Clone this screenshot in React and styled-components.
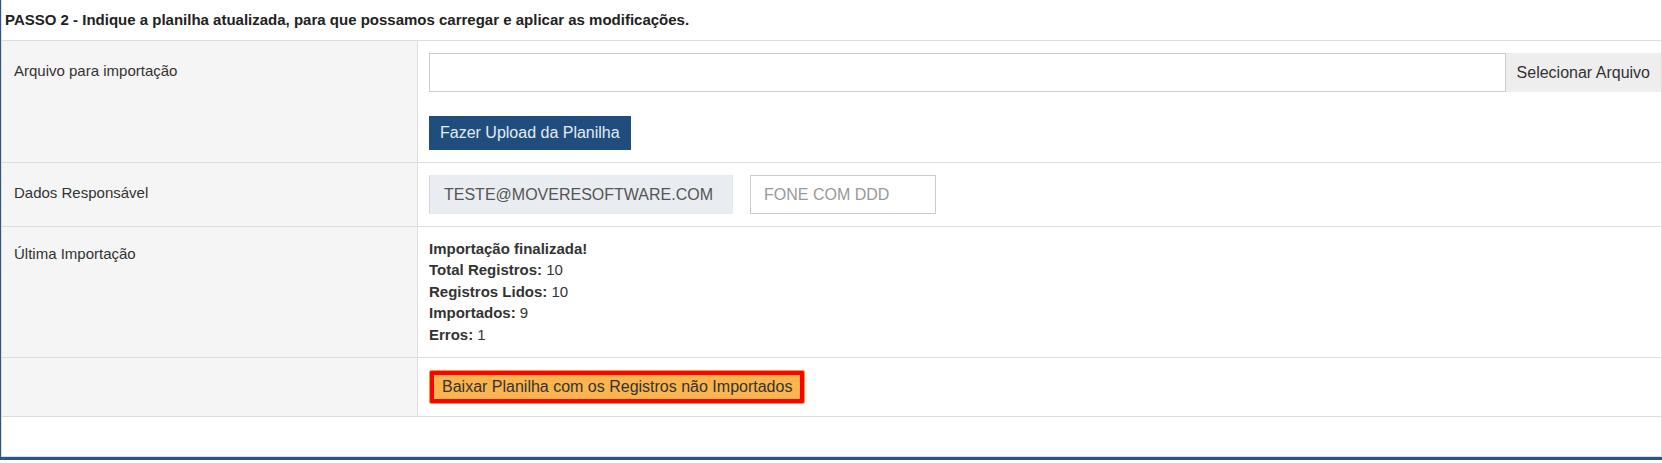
import styled, { createGlobalStyle } from "styled-components";

const GlobalStyle = createGlobalStyle`
  * { box-sizing: border-box; }
  body {
    margin: 0;
    background: #fff;
    color: #333;
    font-family: "Liberation Sans", Arial, sans-serif;
  }
`;

const Frame = styled.div`
  width: 1662px;
  border-left: 1px solid #2a5788;
  border-bottom: 3px solid #2a5788;
`;

const Panel = styled.div`
  border: 1px solid #ddd;
  border-top: none;
  padding-bottom: 39px;
`;

const StepHeader = styled.div`
  height: 41px;
  line-height: 40px;
  padding-left: 3px;
  border-bottom: 1px solid #ddd;
  font-size: 15px;
  font-weight: bold;
  color: #222;
`;

const Row = styled.div`
  display: grid;
  grid-template-columns: 416px 1fr;
  border-bottom: 1px solid #ddd;
`;

const LabelCell = styled.div`
  background: #f5f5f5;
  border-right: 1px solid #ddd;
  padding: ${({ $top }) => $top}px 12px 12px 12px;
  font-size: 15px;
  line-height: 1.42857;
  color: #333;
`;

const ValueCell = styled.div`
  background: #fff;
  padding: 12px 0 12px 11px;
`;

const InputGroup = styled.div`
  display: flex;
  height: 39px;
`;

const FileField = styled.input`
  flex: 1;
  height: 100%;
  border: 1px solid #ccc;
  background: #fff;
  font-family: inherit;
  font-size: 16px;
  outline: none;
`;

const Addon = styled.span`
  display: flex;
  align-items: center;
  padding: 0 11px;
  background: #eee;
  font-size: 16px;
  color: #333;
  white-space: nowrap;
`;

const UploadButton = styled.button`
  display: block;
  margin-top: 24px;
  height: 34px;
  padding: 0 11px;
  border: none;
  background: #1f4e7e;
  color: #e4ebf3;
  font-family: inherit;
  font-size: 16px;
  cursor: pointer;
`;

const ContactFields = styled.div`
  display: flex;
  gap: 17px;
`;

const TextField = styled.input`
  width: ${({ $width }) => $width}px;
  height: 39px;
  padding: 0 ${({ $pad }) => $pad}px;
  border: 1px solid ${({ $readonly }) => ($readonly ? "#e6e9ed" : "#ccc")};
  border-left-color: ${({ $readonly }) => ($readonly ? "#d2d5d9" : "#ccc")};
  background: ${({ $readonly }) => ($readonly ? "#e9ecf0" : "#fff")};
  color: #555;
  font-family: inherit;
  font-size: 16px;
  text-transform: uppercase;
  outline: none;

  &::placeholder {
    color: #999;
    opacity: 1;
  }
`;

const Stats = styled.div`
  font-size: 15px;
  line-height: 1.42857;
  color: #333;
  margin-top: -1px;
`;

const StatLine = styled.div`
  b {
    font-weight: bold;
  }
`;

const DownloadButton = styled.button`
  display: inline-flex;
  align-items: center;
  height: 34px;
  padding: 0 12px;
  border: 1px solid #eea236;
  border-radius: 2px;
  box-shadow: inset 0 0 0 4px #ff0000;
  background: #fbb44e;
  color: #333;
  font-family: inherit;
  font-size: 16px;
  cursor: pointer;
`;

const stats = [
  ["Total Registros:", "10"],
  ["Registros Lidos:", "10"],
  ["Importados:", "9"],
  ["Erros:", "1"],
];

export default function App() {
  return (
    <>
      <GlobalStyle />
      <Frame>
        <Panel>
          <StepHeader>
            PASSO 2 - Indique a planilha atualizada, para que possamos carregar e aplicar as modificações.
          </StepHeader>

          <Row>
            <LabelCell $top={19}>Arquivo para importação</LabelCell>
            <ValueCell>
              <InputGroup>
                <FileField type="text" readOnly />
                <Addon>Selecionar Arquivo</Addon>
              </InputGroup>
              <UploadButton>Fazer Upload da Planilha</UploadButton>
            </ValueCell>
          </Row>

          <Row>
            <LabelCell $top={19}>Dados Responsável</LabelCell>
            <ValueCell>
              <ContactFields>
                <TextField
                  $width={304}
                  $pad={14}
                  $readonly
                  readOnly
                  defaultValue="teste@moveresoftware.com"
                />
                <TextField $width={186} $pad={13} placeholder="FONE COM DDD" />
              </ContactFields>
            </ValueCell>
          </Row>

          <Row>
            <LabelCell $top={16}>Última Importação</LabelCell>
            <ValueCell>
              <Stats>
                <StatLine>
                  <b>Importação finalizada!</b>
                </StatLine>
                {stats.map(([k, v]) => (
                  <StatLine key={k}>
                    <b>{k}</b> {v}
                  </StatLine>
                ))}
              </Stats>
            </ValueCell>
          </Row>

          <Row>
            <LabelCell $top={12} />
            <ValueCell>
              <DownloadButton>Baixar Planilha com os Registros não Importados</DownloadButton>
            </ValueCell>
          </Row>
        </Panel>
      </Frame>
    </>
  );
}
